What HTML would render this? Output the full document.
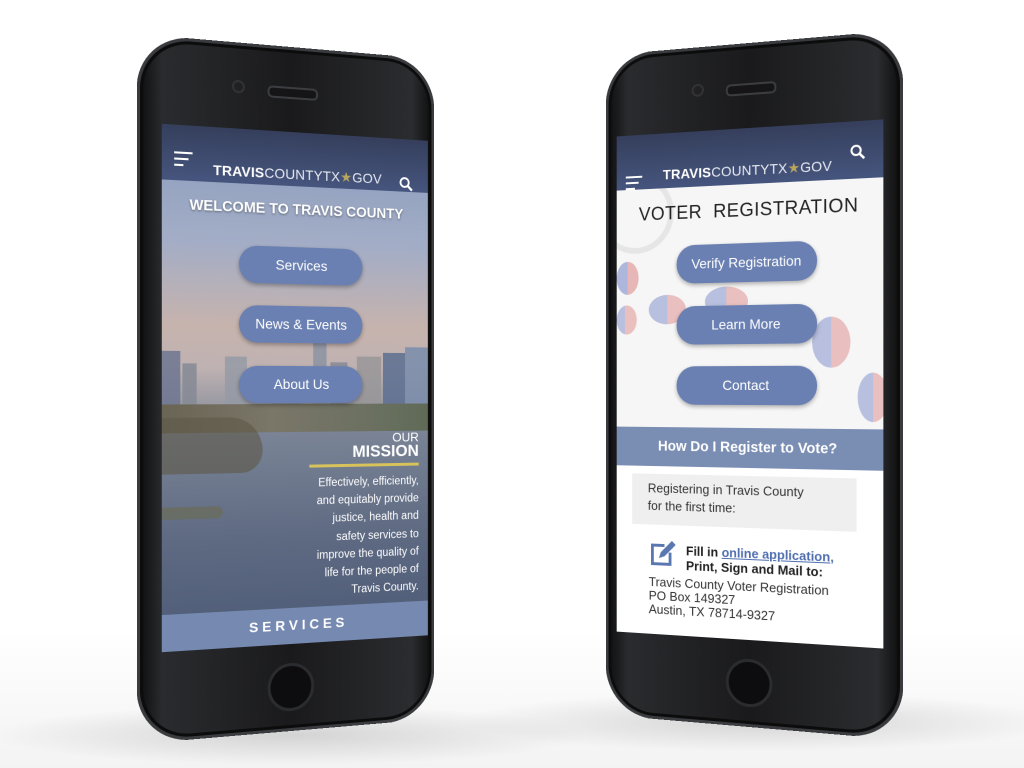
<!DOCTYPE html>
<html><head><meta charset="utf-8"><style>
html,body{margin:0;padding:0;width:1024px;height:768px;overflow:hidden;background:#fff;font-family:"Liberation Sans",sans-serif}
.bg{position:absolute;left:0;top:0;width:1024px;height:768px;background:radial-gradient(ellipse 300px 30px at 290px 735px,rgba(0,0,0,.14),rgba(0,0,0,0)),radial-gradient(ellipse 300px 30px at 760px 722px,rgba(0,0,0,.14),rgba(0,0,0,0)),linear-gradient(#fff 0,#fff 82%,#f3f3f3 100%)}
.phone{position:absolute;width:306px;height:684px;border-radius:52px;background:linear-gradient(90deg,#0b0b0c,#2a2b2e 8%,#1a1a1c 50%,#2b2c2f 92%,#0a0a0a);box-shadow:inset 0 0 0 3px #3a3b3f,inset 0 0 0 6px #0c0c0d;}
.p1{left:138px;top:47px;transform:perspective(1000px) rotateY(14deg)}
.p2{left:596px;top:43px;transform:perspective(1000px) rotateY(-14deg)}
.spk{position:absolute;width:48px;height:8px;border-radius:5px;border:2px solid #3c3d41;background:#151517;left:50%;top:40px;margin-left:-24px}
.cam{position:absolute;width:9px;height:9px;border-radius:50%;border:2px solid #333;left:50%;margin-left:-60px;top:37px}
.home{position:absolute;width:42px;height:42px;border-radius:50%;border:3px solid #2b2c30;background:#0d0d0f;left:50%;margin-left:-24px;bottom:20px}
.scr{position:absolute;width:275px;height:512px;overflow:hidden;top:85px}
.p1 .scr{left:24px;background:linear-gradient(#8a9cbd 0,#a3adc6 22%,#c6b3ad 38%,#bfb2b2 46%,#8a8f9c 56%,#6a7488 64%,#5a6780 80%,#4a5672 100%)}
.p2 .scr{left:12px;background:#f6f6f6}
.hdr{position:absolute;left:0;top:0;width:100%;height:54px;background:linear-gradient(#353f5c,#46557e)}
.logo{position:absolute;left:0;width:100%;text-align:center;color:#fff;font-size:14px;letter-spacing:.2px}
.logo b{font-weight:bold}.logo span{font-weight:normal;color:#e8ebf2}.logo i{font-style:normal;color:#b9a65c}
.ham{position:absolute;width:18px}
.ham div{height:2px;background:#fff;margin-bottom:4px}
.btn{position:absolute;height:37px;border-radius:19px;background:#6a80b2;color:#fff;font-size:14px;text-align:center;line-height:37px;box-shadow:0 2px 4px rgba(0,0,0,.3)}
.bld{position:absolute;bottom:0;background:#6b7280;opacity:.85}
</style></head><body>
<div class="bg"></div>

<div class="phone p1">
 <div class="cam"></div><div class="spk"></div>
 <div class="scr">
  <div style="position:absolute;left:0;top:185px;width:275px;height:95px">
   <div class="bld" style="left:0;width:18px;height:60px;background:#6d7690"></div>
   <div class="bld" style="left:20px;width:14px;height:48px;background:#858994"></div>
   <div class="bld" style="left:62px;width:22px;height:55px;background:#959aa6"></div>
   <div class="bld" style="left:110px;width:30px;height:40px;background:#8a8e9a"></div>
   <div class="bld" style="left:152px;width:14px;height:92px;background:#8c93a3"></div>
   <div class="bld" style="left:170px;width:18px;height:50px;background:#868a96"></div>
   <div class="bld" style="left:198px;width:26px;height:56px;background:#999799"></div>
   <div class="bld" style="left:226px;width:24px;height:60px;background:#5c6e90"></div>
   <div class="bld" style="left:250px;width:25px;height:66px;background:#7a8cab"></div>
  </div>
  <div style="position:absolute;left:0;top:272px;width:275px;height:30px;background:linear-gradient(90deg,#6a6454,#7a7668 40%,#6a7060 80%,#5f6a56)"></div>
  <div style="position:absolute;left:0;top:300px;width:275px;height:212px;background:linear-gradient(#7a8496,#5e6a82 50%,#4d5a76)"></div>
  <div style="position:absolute;left:0;top:285px;width:100px;height:55px;background:#5e5948;border-radius:0 60px 40px 0;opacity:.6"></div>
  <div style="position:absolute;left:0;top:372px;width:60px;height:12px;background:#6a6a50;border-radius:0 10px 10px 0;opacity:.6"></div>
  <div class="hdr"></div>
  <div class="ham" style="left:12px;top:26px"><div></div><div style="width:14px"></div><div style="width:9px"></div></div>
  <div class="logo" style="top:34px"><b>TRAVIS</b><span>COUNTYTX</span><i>★</i><span>GOV</span></div>
  <svg style="position:absolute;right:16px;top:38px" width="16" height="16" viewBox="0 0 16 16"><circle cx="6.5" cy="6.5" r="4.5" fill="none" stroke="#fff" stroke-width="2"/><path d="M10 10l4.5 4.5" stroke="#fff" stroke-width="2.4"/></svg>
  <div style="position:absolute;left:0;width:100%;top:70px;text-align:center;color:#fff;font-weight:bold;font-size:14.5px;text-shadow:0 1px 2px rgba(0,0,0,.4)">WELCOME TO TRAVIS COUNTY</div>
  <div class="btn" style="left:76px;width:128px;top:115px">Services</div>
  <div class="btn" style="left:76px;width:128px;top:174px">News &amp; Events</div>
  <div class="btn" style="left:76px;width:128px;top:234px">About Us</div>
  <div style="position:absolute;right:10px;top:300px;color:#fff;text-align:right;line-height:13px"><div style="font-size:13px">OUR</div><div style="font-size:17px;font-weight:bold;line-height:16px">MISSION</div></div>
  <div style="position:absolute;right:10px;top:333px;width:117px;height:3px;background:#d8c35a"></div>
  <div style="position:absolute;right:10px;top:343px;color:#fff;text-align:right;font-size:11.5px;line-height:18.2px">Effectively, efficiently,<br>and equitably provide<br>justice, health and<br>safety services to<br>improve the quality of<br>life for the people of<br>Travis County.</div>
  <div style="position:absolute;left:0;top:476px;width:100%;height:40px;background:#7589b1;color:#fff;text-align:center;font-weight:bold;font-size:14px;letter-spacing:4px;line-height:34px">SERVICES</div>
 </div>
 <div class="home"></div>
</div>

<div class="phone p2">
 <div class="cam"></div><div class="spk"></div>
 <div class="scr">
  <div style="position:absolute;left:-20px;top:40px;width:70px;height:70px;border-radius:50%;border:6px solid #e6e6e6"></div>
  <div style="position:absolute;left:0;top:130px;width:24px;height:34px;border-radius:50%;background:linear-gradient(90deg,#8e9bd0 50%,#e19a9a 50%);opacity:.7"></div>
  <div style="position:absolute;left:35px;top:165px;width:40px;height:30px;border-radius:50%;background:linear-gradient(90deg,#8e9bd0 50%,#e19a9a 50%);opacity:.6"></div>
  <div style="position:absolute;left:95px;top:158px;width:45px;height:30px;border-radius:50%;background:linear-gradient(90deg,#8e9bd0 50%,#e19a9a 50%);opacity:.6"></div>
  <div style="position:absolute;left:205px;top:190px;width:38px;height:50px;border-radius:50%;background:linear-gradient(90deg,#8e9bd0 50%,#e19a9a 50%);opacity:.6"></div>
  <div style="position:absolute;left:250px;top:245px;width:30px;height:48px;border-radius:50%;background:linear-gradient(90deg,#8e9bd0 50%,#e19a9a 50%);opacity:.6"></div>
  <div style="position:absolute;left:0;top:175px;width:22px;height:30px;border-radius:50%;background:linear-gradient(90deg,#8e9bd0 40%,#e19a9a 40%);opacity:.6"></div>
  <div class="hdr" style="height:56px"></div>
  <div class="ham" style="left:10px;top:42px"><div></div><div style="width:14px"></div><div style="width:10px"></div></div>
  <div class="logo" style="top:34px"><b>TRAVIS</b><span>COUNTYTX</span><i>★</i><span>GOV</span></div>
  <svg style="position:absolute;right:17px;top:22px" width="16" height="16" viewBox="0 0 16 16"><circle cx="6.5" cy="6.5" r="4.5" fill="none" stroke="#fff" stroke-width="2"/><path d="M10 10l4.5 4.5" stroke="#fff" stroke-width="2.4"/></svg>
  <div style="position:absolute;left:0;width:100%;top:72px;text-align:center;color:#222;font-size:19px;letter-spacing:.5px">VOTER&nbsp; REGISTRATION</div>
  <div class="btn" style="left:65px;width:145px;top:115px;height:39px;line-height:39px">Verify Registration</div>
  <div class="btn" style="left:65px;width:145px;top:177px;height:39px;line-height:39px">Learn More</div>
  <div class="btn" style="left:65px;width:145px;top:238px;height:39px;line-height:39px">Contact</div>
  <div style="position:absolute;left:0;top:300px;width:100%;height:40px;background:#7a8db3;color:#fff;text-align:center;font-weight:bold;font-size:14.5px;line-height:40px">How Do I Register to Vote?</div>
  <div style="position:absolute;left:0;top:340px;width:100%;height:172px;background:#fff"></div>
  <div style="position:absolute;left:17px;top:348px;width:232px;height:52px;background:#efefef;color:#333;font-size:13px;line-height:18px;padding:6px 0 0 17px;box-sizing:border-box">Registering in Travis County<br>for the first time:</div>
  <svg style="position:absolute;left:35px;top:416px" width="30" height="28" viewBox="0 0 30 28"><path d="M17 5H4v19h19V12" fill="none" stroke="#5a77b0" stroke-width="3"/><path d="M11 18l2-6 12-12 4 4-12 12z" fill="#5a77b0"/></svg>
  <div style="position:absolute;left:75px;top:418px;color:#222;font-size:13px;font-weight:bold;line-height:15px">Fill in <span style="color:#4f6fb0;text-decoration:underline">online application,</span><br>Print, Sign and Mail to:</div>
  <div style="position:absolute;left:35px;top:452px;color:#333;font-size:13px;line-height:14px">Travis County Voter Registration<br>PO Box 149327<br>Austin, TX 78714-9327</div>
 </div>
 <div class="home"></div>
</div>
</body></html>
